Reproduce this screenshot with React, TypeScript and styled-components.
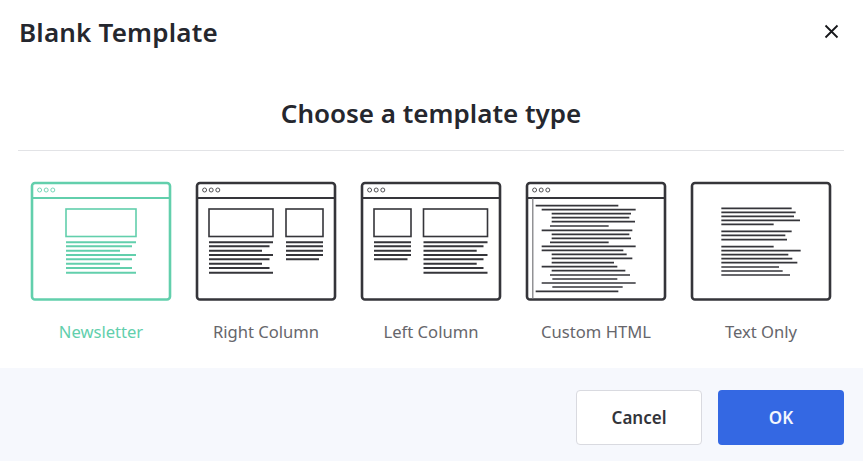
import React, { useState } from "react";
import styled, { createGlobalStyle } from "styled-components";

const GlobalStyle = createGlobalStyle`
  html, body {
    margin: 0;
    padding: 0;
    background: #fff;
  }
  body {
    font-family: "Noto Sans", "Open Sans", sans-serif;
  }
`;

const GREEN = "#62cfac";
const DARK = "#35353a";

// [start, end, y] of each text line, in thumbnail coordinates
type TextLine = [number, number, number];

const LINE_YS = [61.3, 65.3, 69.7, 74, 78.3, 82.7, 87, 91.7];

const paragraph = (start: number, ends: number[]): TextLine[] =>
  ends.map((end, i) => [start, end, LINE_YS[i]]);

const fromZoom = (rows: number[][], dx: number, dy: number): TextLine[] =>
  rows.map(([y, a, b]) => [a / 3 + dx, b / 3 + dx, y / 3 + dy]);

const HTML_LINES = fromZoom(
  [
    [107, 557, 805], [119, 575, 857], [131, 605, 843], [143, 605, 838],
    [155, 605, 855], [168, 600, 776], [181, 575, 847], [193, 605, 838],
    [205, 605, 843], [217, 600, 776], [229, 575, 857], [241, 575, 820],
    [253, 605, 830], [265, 605, 847], [278, 605, 792], [290, 575, 802],
    [302, 605, 826], [315, 600, 840], [327, 607, 802], [339, 575, 857],
    [351, 607, 818], [364, 557, 805],
  ],
  -175,
  -11
);

const TEXT_LINES = fromZoom(
  [
    [115, 124, 335], [127, 124, 347], [139, 124, 342], [151, 124, 360],
    [163, 124, 281], [184, 124, 335], [196, 124, 316], [209, 124, 321],
    [230, 124, 281], [242, 124, 362], [254, 124, 325], [266, 124, 337],
    [278, 124, 352], [291, 124, 297], [303, 124, 308], [315, 124, 330],
  ],
  -10,
  -11
);

type Template = {
  name: string;
  chrome: boolean;
  gutter?: boolean;
  boxes: [number, number][];
  lines: TextLine[];
  lineWidth: number;
};

const TEMPLATES: Template[] = [
  {
    name: "Newsletter",
    chrome: true,
    boxes: [[36, 106]],
    lines: paragraph(36, [106, 102, 90, 106, 102, 90, 102, 106]),
    lineWidth: 2,
  },
  {
    name: "Right Column",
    chrome: true,
    boxes: [[14, 78], [91, 128]],
    lines: [
      ...paragraph(14, [78, 74.5, 67, 78, 74.5, 67, 74.5, 78]),
      ...paragraph(91, [128, 128, 128, 128, 124]),
    ],
    lineWidth: 2,
  },
  {
    name: "Left Column",
    chrome: true,
    boxes: [[14, 51], [63.5, 127.5]],
    lines: [
      ...paragraph(14, [51, 51, 51, 51, 47.5]),
      ...paragraph(63.5, [127.5, 123.5, 116.7, 127.5, 123.5, 116.7, 123.5, 127.5]),
    ],
    lineWidth: 2,
  },
  {
    name: "Custom HTML",
    chrome: true,
    gutter: true,
    boxes: [],
    lines: HTML_LINES,
    lineWidth: 1.7,
  },
  {
    name: "Text Only",
    chrome: false,
    boxes: [],
    lines: TEXT_LINES,
    lineWidth: 1.6,
  },
];

function Thumbnail({ template, color }: { template: Template; color: string }) {
  return (
    <svg width="142" height="120" viewBox="0 0 142 120" fill="none">
      <rect x="2" y="2" width="138" height="116.5" rx="3" stroke={color} strokeWidth="2.6" />
      {template.chrome && (
        <g stroke={color}>
          <path d="M2 17H140" strokeWidth="1.9" />
          {[9.6, 16.2, 22.8].map((cx) => (
            <circle key={cx} cx={cx} cy="9" r="2" strokeWidth="1" opacity="0.85" />
          ))}
        </g>
      )}
      {template.gutter && <path d="M7.8 17V118" stroke="#77777b" strokeWidth="1.2" />}
      {template.boxes.map(([a, b]) => (
        <rect key={a} x={a} y="28" width={b - a} height="27.5" stroke={color} strokeWidth="1.6" />
      ))}
      {template.lines.map(([a, b, y], i) => (
        <path key={i} d={`M${a} ${y}H${b}`} stroke={color} strokeWidth={template.lineWidth} />
      ))}
    </svg>
  );
}

function App() {
  const [selected, setSelected] = useState("Newsletter");

  return (
    <>
      <GlobalStyle />
      <Dialog>
        <Header>
          <Title>Blank Template</Title>
          <CloseButton aria-label="Close">
            <svg width="15" height="15" viewBox="0 0 15 15" fill="none">
              <path d="M1.5 1.5L13.5 13.5M13.5 1.5L1.5 13.5" stroke="#16171b" strokeWidth="1.8" />
            </svg>
          </CloseButton>
        </Header>
        <Body>
          <Heading>Choose a template type</Heading>
          <Cards>
            {TEMPLATES.map((template) => {
              const active = template.name === selected;
              return (
                <Card key={template.name} onClick={() => setSelected(template.name)}>
                  <Thumbnail template={template} color={active ? GREEN : DARK} />
                  <CardLabel $active={active}>{template.name}</CardLabel>
                </Card>
              );
            })}
          </Cards>
        </Body>
        <Footer>
          <CancelButton>Cancel</CancelButton>
          <OkButton>OK</OkButton>
        </Footer>
      </Dialog>
    </>
  );
}

const Dialog = styled.div`
  width: 863px;
  height: 461px;
  display: flex;
  flex-direction: column;
  overflow: hidden;
  background: #fff;
`;

const Header = styled.header`
  height: 66px;
  box-sizing: border-box;
  padding: 0 24px 3px 19px;
  display: flex;
  align-items: center;
  justify-content: space-between;
`;

const Title = styled.h1`
  margin: 0;
  font-size: 26px;
  font-weight: 600;
  letter-spacing: 0.2px;
  color: #25272e;
`;

const CloseButton = styled.button`
  width: 15px;
  height: 15px;
  padding: 0;
  border: 0;
  background: none;
  display: flex;
  cursor: pointer;
`;

const Body = styled.main`
  flex: 1;
  padding: 0 19px 0 18px;
`;

const Heading = styled.h2`
  margin: 0;
  height: 85px;
  box-sizing: border-box;
  padding-top: 27px;
  border-bottom: 1px solid #e2e3e6;
  text-align: center;
  font-size: 26px;
  line-height: 40px;
  font-weight: 600;
  color: #25272e;
`;

const Cards = styled.div`
  display: flex;
  gap: 23px;
  padding: 30px 0 0 12px;
`;

const Card = styled.div`
  width: 142px;
  display: flex;
  flex-direction: column;
  align-items: center;
  cursor: pointer;
`;

const CardLabel = styled.span<{ $active: boolean }>`
  margin-top: 19px;
  font-size: 16.6px;
  line-height: 24px;
  color: ${(props) => (props.$active ? "#62cfac" : "#66666b")};
`;

const Footer = styled.footer`
  height: 93px;
  box-sizing: border-box;
  padding: 22px 19px 0 0;
  display: flex;
  justify-content: flex-end;
  gap: 16px;
  background: #f6f8fd;
`;

const CancelButton = styled.button`
  width: 126px;
  height: 55px;
  border: 1px solid #d9dae0;
  border-radius: 4px;
  background: #fff;
  font-family: inherit;
  font-size: 17px;
  font-weight: 600;
  color: #33343a;
`;

const OkButton = styled.button`
  width: 126px;
  height: 55px;
  border: 0;
  border-radius: 4px;
  background: #3468e3;
  font-family: inherit;
  font-size: 17px;
  font-weight: 600;
  color: #f3f6fd;
`;

export default App;
